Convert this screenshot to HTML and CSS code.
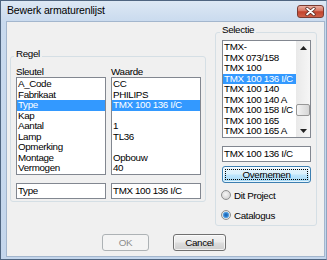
FILE: index.html
```html
<!DOCTYPE html>
<html>
<head>
<meta charset="utf-8">
<link rel="stylesheet" href="styles.css">
</head>
<body>
<div class="window">
  <div class="titlebar">
    <span class="title">Bewerk armaturenlijst</span>
    <span class="close">
      <svg width="27" height="13" viewBox="0 0 27 13">
        <path d="M10 3.5 L17 9.5 M17 3.5 L10 9.5" stroke="#5a2a22" stroke-width="3.4" stroke-linecap="round"/>
        <path d="M10 3.5 L17 9.5 M17 3.5 L10 9.5" stroke="#ffffff" stroke-width="1.7" stroke-linecap="round"/>
      </svg>
    </span>
  </div>
  <div class="client">
    <div class="top">
      <fieldset class="group regel">
        <legend>Regel</legend>
        <div class="cols">
          <div class="col">
            <div class="label">Sleutel</div>
            <div class="list">
              <div class="item">A_Code</div>
              <div class="item">Fabrikaat</div>
              <div class="item sel">Type</div>
              <div class="item">Kap</div>
              <div class="item">Aantal</div>
              <div class="item">Lamp</div>
              <div class="item">Opmerking</div>
              <div class="item">Montage</div>
              <div class="item">Vermogen</div>
            </div>
            <div class="input">Type</div>
          </div>
          <div class="col">
            <div class="label">Waarde</div>
            <div class="list">
              <div class="item">CC</div>
              <div class="item">PHILIPS</div>
              <div class="item sel">TMX 100 136 I/C</div>
              <div class="item"></div>
              <div class="item">1</div>
              <div class="item">TL36</div>
              <div class="item"></div>
              <div class="item">Opbouw</div>
              <div class="item">40</div>
            </div>
            <div class="input">TMX 100 136 I/C</div>
          </div>
        </div>
      </fieldset>
      <fieldset class="group selectie">
        <legend>Selectie</legend>
        <div class="list scroll">
          <div class="items">
            <div class="item">TMX-</div>
            <div class="item">TMX 073/158</div>
            <div class="item">TMX 100</div>
            <div class="item sel">TMX 100 136 I/C</div>
            <div class="item">TMX 100 140</div>
            <div class="item">TMX 100 140 A</div>
            <div class="item">TMX 100 158 I/C</div>
            <div class="item">TMX 100 165</div>
            <div class="item">TMX 100 165 A</div>
          </div>
          <div class="scrollbar">
            <div class="arrow"><svg width="7" height="4" viewBox="0 0 7 4"><path d="M0 4 L3.5 0 L7 4 Z" fill="#222"/></svg></div>
            <div class="thumb"></div>
            <div class="spacer"></div>
            <div class="arrow"><svg width="7" height="4" viewBox="0 0 7 4"><path d="M0 0 L3.5 4 L7 0 Z" fill="#222"/></svg></div>
          </div>
        </div>
        <div class="input">TMX 100 136 I/C</div>
        <div class="button default"><div class="focus">Overnemen</div></div>
        <div class="radio first"><span class="dot"></span><span>Dit Project</span></div>
        <div class="radio"><span class="dot checked"></span><span>Catalogus</span></div>
      </fieldset>
    </div>
    <div class="actions">
      <div class="button disabled ok">OK</div>
      <div class="button cancel">Cancel</div>
    </div>
  </div>
</div>
</body>
</html>
```

FILE: styles.css
```css
html, body {
  margin: 0;
  padding: 0;
}
body {
  width: 327px;
  height: 260px;
  overflow: hidden;
  font-family: "Liberation Sans", Arial, sans-serif;
  font-size: 9.8px;
  letter-spacing: -0.35px;
  color: #000;
}
.window {
  box-sizing: border-box;
  width: 327px;
  height: 260px;
  border: 1px solid #4f6580;
  border-right-color: #8ea5c0;
  padding: 0 1px 2px 5px;
  background: linear-gradient(#dde8f4, #c9daee 21px, #c4d6ec);
  display: flex;
  flex-direction: column;
}
.titlebar {
  height: 20px;
  flex: none;
  display: flex;
  align-items: flex-start;
}
.title {
  font-size: 10.5px;
  letter-spacing: -0.15px;
  line-height: 11px;
  margin: 4px 0 0 1px;
  color: #000;
}
.close {
  margin: 4px 1px 0 auto;
  width: 27px;
  height: 13px;
  box-sizing: border-box;
  border: 1px solid #7a3b31;
  border-radius: 3px;
  background: linear-gradient(#eab0a3, #d87561 45%, #c2432d 52%, #cf6149);
  display: flex;
}
.close svg {
  display: block;
  margin: -1px;
}
.client {
  flex: 1;
  box-sizing: border-box;
  border: 1px solid #a3b6cd;
  background: #f0f0f0;
  display: flex;
  flex-direction: column;
}
.top {
  display: flex;
  align-items: flex-start;
}
.group {
  margin: 0;
  box-sizing: border-box;
  border: 1px solid #d5dfe5;
  border-radius: 3px;
  min-width: 0;
}
.group legend {
  padding: 0 2px 5px;
  margin-left: -2px;
  line-height: 11px;
}
.regel {
  width: 196px;
  margin: 26px 0 0 3px;
  padding: 3px 4px 2px 5px;
}
.selectie {
  width: 102px;
  margin: 2px 0 0 9px;
  padding: 0 5px 0 6px;
}
.cols {
  display: flex;
  gap: 5px;
}
.col {
  width: 90px;
}
.label {
  line-height: 10px;
}
.list {
  box-sizing: border-box;
  height: 98px;
  border: 1px solid #828790;
  background: #fff;
  padding-top: 1px;
  overflow: hidden;
}
.item {
  height: 10.5px;
  line-height: 10.5px;
  padding-left: 1px;
  white-space: nowrap;
  overflow: hidden;
}
.item.sel {
  background: #3399ff;
  color: #fff;
}
.list.scroll {
  display: flex;
  padding-top: 0;
}
.items {
  flex: 1;
  min-width: 0;
  padding-top: 1px;
}
.scrollbar {
  width: 14px;
  flex: none;
  background: linear-gradient(90deg, #e9e9e9, #f6f6f6);
  display: flex;
  flex-direction: column;
}
.arrow {
  height: 13px;
  display: flex;
  align-items: center;
  justify-content: center;
}
.arrow svg {
  display: block;
}
.thumb {
  margin: 50px 0 0 0;
  height: 12px;
  box-sizing: border-box;
  border: 1px solid #979797;
  border-radius: 2px;
  background: linear-gradient(90deg, #f4f4f4, #e4e4e4 50%, #d6d6d6);
}
.spacer {
  flex: 1;
}
.input {
  box-sizing: border-box;
  height: 16px;
  margin-top: 8px;
  border: 1px solid #828790;
  background: #fff;
  padding-left: 1px;
  line-height: 14px;
  white-space: nowrap;
  overflow: hidden;
}
.button {
  box-sizing: border-box;
  height: 17px;
  border: 1px solid #707070;
  border-radius: 3px;
  background: linear-gradient(#f2f2f2, #ebebeb 48%, #dddddd 52%, #cfcfcf);
  box-shadow: inset 0 0 0 1px rgba(255, 255, 255, 0.7);
  display: flex;
  align-items: center;
  justify-content: center;
  line-height: 11px;
}
.button.default {
  margin-top: 4px;
  border-color: #3c7fb1;
  background: linear-gradient(#eaf6fd, #d9f0fc 48%, #bee6fd 52%, #a7d9f5);
  padding: 2px;
}
.focus {
  flex: 1;
  align-self: stretch;
  box-sizing: border-box;
  border: 1px dotted #000;
  display: flex;
  align-items: center;
  justify-content: center;
}
.button.disabled {
  border-color: #adb2b5;
  background: #f4f4f4;
  box-shadow: none;
  color: #8d8d8d;
}
.radio {
  height: 20px;
  display: flex;
  align-items: center;
  gap: 3px;
  margin-left: -1px;
}
.radio.first {
  margin-top: 2px;
}
.dot {
  width: 10px;
  height: 10px;
  box-sizing: border-box;
  border-radius: 50%;
  border: 1px solid #8e8f8f;
  background: radial-gradient(circle at 45% 40%, #f6f6f6, #d6d6d6 70%, #c4c4c4);
}
.dot.checked {
  background: radial-gradient(circle, #1a5fa8 0, #2e7fd0 1.8px, #6fb2e8 3px, #e8e8e8 3.6px, #cfcfcf);
}
.actions {
  display: flex;
  gap: 24px;
  margin: 8px 0 0 95px;
}
.ok {
  width: 47px;
}
.cancel {
  width: 53px;
}
```
